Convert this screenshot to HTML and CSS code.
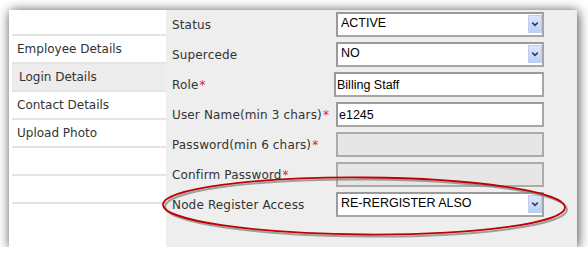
FILE: index.html
```html
<!DOCTYPE html>
<html lang="en">
<head>
  <meta charset="UTF-8" />
  <title>Login Details</title>
  <link rel="stylesheet" href="styles.css">
</head>
<body>
  <div class="panel">
    <div class="side">
      <div class="side-item"></div>
      <div class="side-item">Employee Details</div>
      <div class="side-item active">Login Details</div>
      <div class="side-item">Contact Details</div>
      <div class="side-item">Upload Photo</div>
      <div class="side-item"></div>
      <div class="side-item"></div>
    </div>
    <div class="form">
      <div class="label">Status</div>
      <div class="field select">ACTIVE<span class="arrow"><svg width="8" height="6" viewBox="0 0 8 6"><path d="M1.2 1.6 L4 4.3 L6.8 1.6" fill="none" stroke="#2c3d6c" stroke-width="1.6"/></svg></span></div>

      <div class="label">Supercede</div>
      <div class="field select">NO<span class="arrow"><svg width="8" height="6" viewBox="0 0 8 6"><path d="M1.2 1.6 L4 4.3 L6.8 1.6" fill="none" stroke="#2c3d6c" stroke-width="1.6"/></svg></span></div>

      <div class="label">Role<span class="req">*</span></div>
      <div class="field text shift">Billing Staff</div>

      <div class="label">User Name(min 3 chars)<span class="req">*</span></div>
      <div class="field text">e1245</div>

      <div class="label">Password(min 6 chars)<span class="req">*</span></div>
      <div class="field disabled"></div>

      <div class="label">Confirm Password<span class="req">*</span></div>
      <div class="field disabled"></div>

      <div class="label">Node Register Access</div>
      <div class="field select">RE-RERGISTER ALSO<span class="arrow"><svg width="8" height="6" viewBox="0 0 8 6"><path d="M1.2 1.6 L4 4.3 L6.8 1.6" fill="none" stroke="#2c3d6c" stroke-width="1.6"/></svg></span></div>
    </div>

    <!-- hand drawn highlight round the last row -->
    <svg class="callout" width="588" height="259" viewBox="0 0 588 259">
      <ellipse cx="366" cy="208" rx="201" ry="28.5" transform="rotate(0.4 366 208)" fill="none" stroke="#8a8a8a" stroke-width="2" opacity="0.8"/>
      <ellipse cx="364" cy="206" rx="201" ry="28.5" transform="rotate(0.4 364 206)" fill="none" stroke="#c00000" stroke-width="1.8"/>
    </svg>
  </div>
</body>
</html>
```

FILE: styles.css
```css
body {
  margin: 0;
  padding: 10px 0 0 9px;
  background-color: #fff;
  font-family: "DejaVu Sans", Verdana, sans-serif;
  font-size: 12px;
  color: #333;
}

.panel {
  display: flex;
  width: 568px;
  height: 237px;
  background-color: #fff;
  box-shadow: 1px 1px 11px rgba(0, 0, 0, 0.75);
}

.side {
  width: 154px;
  padding-left: 3px;
  display: flex;
  flex-direction: column;
}
.side-item {
  height: 26px;
  line-height: 26px;
  padding-left: 5px;
  border-bottom: 2px solid #e4e4e4;
  white-space: nowrap;
}
.side-item:first-child {
  height: 24px;
}
.side-item.active {
  background-color: #ececec;
  padding-left: 7px;
}

.form {
  flex: 1;
  background-color: #eeeeee;
  padding: 2px 0 0 6px;
  display: grid;
  grid-template-columns: 164px 208px;
  grid-auto-rows: 25px;
  row-gap: 5px;
  align-content: start;
}

.label {
  display: flex;
  align-items: center;
  white-space: nowrap;
  letter-spacing: 0.15px;
}
.req {
  color: #e02020;
  margin-left: 1px;
}

.field {
  position: relative;
  box-sizing: border-box;
  height: 25px;
  border: 2px solid #a6a6a6;
  border-top-color: #9a9a9a;
  border-left-color: #9a9a9a;
  background-color: #fff;
  font-family: "Liberation Sans", Arial, sans-serif;
  font-size: 12.5px;
  color: #000;
  white-space: nowrap;
}
.select {
  padding: 2px 0 0 3px;
}
.text {
  padding: 4px 0 0 1px;
}
.shift {
  margin-left: -2px;
  width: 210px;
}
.disabled {
  background-color: #e6e6e6;
  border-color: #ababab;
}

.arrow {
  position: absolute;
  right: 0;
  top: 1px;
  width: 14px;
  height: 18px;
  box-sizing: border-box;
  border: 1px solid #bccdee;
  background: linear-gradient(#dce6fb, #bcd0f4);
  display: flex;
  align-items: center;
  justify-content: center;
}
.arrow svg {
  display: block;
}

.callout {
  position: absolute;
  left: 0;
  top: 0;
  pointer-events: none;
}
```
